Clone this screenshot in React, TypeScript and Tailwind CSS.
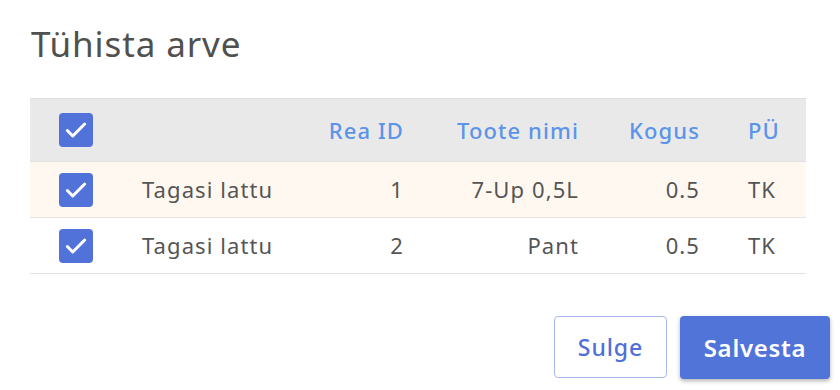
import React from 'react'

const rows = [
  { action: 'Tagasi lattu', id: 1, name: '7-Up 0,5L', qty: '0.5', unit: 'TK', highlight: true },
  { action: 'Tagasi lattu', id: 2, name: 'Pant', qty: '0.5', unit: 'TK', highlight: false },
]

function Check() {
  return (
    <div className="w-[34px] h-[34px] rounded-[4px] bg-[#5173d9] flex items-center justify-center">
      <svg width="26" height="26" viewBox="0 0 24 24" fill="none">
        <path d="M4 12.5l5 5L20 6.5" stroke="white" strokeWidth="2.8" strokeLinecap="round" strokeLinejoin="round" />
      </svg>
    </div>
  )
}

const cols = 'grid grid-cols-[82px_188px_125px_175px_121px_1fr]'
const head = 'text-[22px] font-medium tracking-[0.05em] text-[#5b94e8]'

export default function App() {
  return (
    <div className="w-[840px] h-[390px] bg-white font-['Noto_Sans',sans-serif] text-[#555]">
      <div className="pt-[19px] pl-[31px]">
        <h1 className="text-[35px] leading-[50px] tracking-[0.025em] text-[#505050]">Tühista arve</h1>
      </div>

      <div className="mt-[29px] ml-[30px] w-[776px]">
        <div className={`${cols} h-[64px] items-center bg-[#e9e9e9] border-t border-[#dedede] border-b border-b-[#e2e2e2]`}>
          <div className="pl-[29px]"><Check /></div>
          <div />
          <div className={`text-right pr-[21px] ${head}`}>Rea ID</div>
          <div className={`text-right pr-[21px] ${head}`}>Toote nimi</div>
          <div className={`text-right pr-[21px] ${head}`}>Kogus</div>
          <div className={`pl-[27px] ${head}`}>PÜ</div>
        </div>
        {rows.map((r) => (
          <div
            key={r.id}
            className={`${cols} h-[56px] items-center border-b border-[#e2e2e2] text-[22px] tracking-[0.05em] ${r.highlight ? 'bg-[#fff8f1]' : 'bg-white'}`}
          >
            <div className="pl-[29px]"><Check /></div>
            <div className="pl-[30px]">{r.action}</div>
            <div className="text-right pr-[21px]">{r.id}</div>
            <div className="text-right pr-[21px]">{r.name}</div>
            <div className="text-right pr-[21px]">{r.qty}</div>
            <div className="pl-[27px]">{r.unit}</div>
          </div>
        ))}
      </div>

      <div className="flex justify-end gap-[13px] pr-[10px] mt-[42px]">
        <button className="w-[113px] h-[62px] rounded-[4px] border border-[#a9b9ec] bg-white text-[23px] font-medium tracking-[0.04em] text-[#4f6fd9]">
          Sulge
        </button>
        <button className="w-[150px] h-[63px] rounded-[4px] bg-[#5174d9] text-[24px] font-semibold tracking-[0.03em] text-white shadow-[0_2px_4px_rgba(0,0,0,0.3)]">
          Salvesta
        </button>
      </div>
    </div>
  )
}
